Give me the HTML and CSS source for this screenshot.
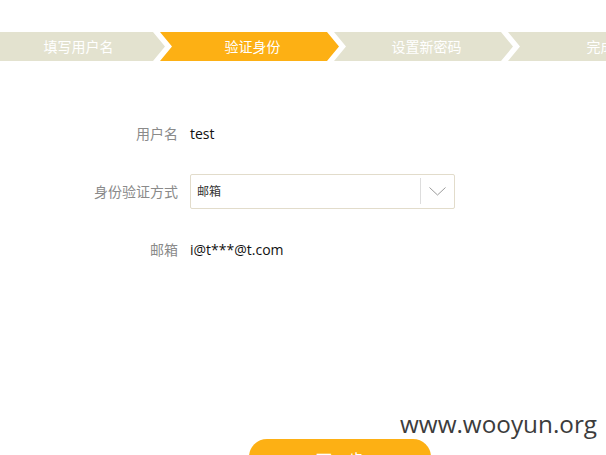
FILE: index.html
```html
<!DOCTYPE html>
<html lang="zh">
<head>
<meta charset="utf-8">
<link rel="stylesheet" href="styles.css">
</head>
<body>
<div class="page">
  <div class="steps">
    <div class="step">填写用户名</div>
    <div class="step active">验证身份</div>
    <div class="step">设置新密码</div>
    <div class="step">完成</div>
  </div>
  <div class="form">
    <div class="row">
      <div class="label">用户名</div>
      <div class="value">test</div>
    </div>
    <div class="row">
      <div class="label">身份验证方式</div>
      <div class="select">
        <span class="select-text">邮箱</span>
        <span class="select-arrow">
          <svg width="17" height="9" viewBox="0 0 17 9"><path d="M0.5 0.5 L8.5 8 L16.5 0.5" fill="none" stroke="#9a9a9a" stroke-width="1"/></svg>
        </span>
      </div>
    </div>
    <div class="row">
      <div class="label">邮箱</div>
      <div class="value">i@t***@t.com</div>
    </div>
  </div>
  <div class="actions">
    <button class="btn">下一步</button>
  </div>
  <div class="watermark">www.wooyun.org</div>
</div>
</body>
</html>
```
FILE: styles.css
```css
html, body {
  margin: 0;
  padding: 0;
  background: #fff;
  overflow: hidden;
}
body {
  font-family: "Open Sans", "Noto Sans CJK SC", sans-serif;
  width: 606px;
  height: 455px;
}
.page {
  position: relative;
  width: 606px;
  height: 455px;
  overflow: hidden;
}
.steps {
  display: flex;
  margin-top: 32px;
  margin-left: -14px;
  height: 29px;
  width: 760px;
}
.step {
  flex: 0 0 179px;
  box-sizing: border-box;
  padding-left: 6px;
  height: 29px;
  margin-right: -5px;
  background: #e3e2cf;
  color: #fff;
  font-size: 14px;
  line-height: 29px;
  text-align: center;
  clip-path: polygon(0 0, 167px 0, 179px 50%, 167px 100%, 0 100%, 12px 50%);
}
.step.active {
  background: #fdb014;
}
.form {
  margin-top: 54px;
  display: flex;
  flex-direction: column;
  gap: 22px;
}
.row {
  display: flex;
  align-items: center;
  height: 36px;
  gap: 12px;
}
.label {
  width: 178px;
  text-align: right;
  color: #8a8a8a;
  font-size: 14px;
}
.value {
  color: #111;
  font-size: 14px;
}
.select {
  width: 263px;
  height: 33px;
  border: 1px solid #e2dccb;
  border-radius: 2px;
  display: flex;
  align-items: center;
  justify-content: space-between;
}
.select-text {
  padding-left: 6px;
  font-size: 12px;
  color: #333;
}
.select-arrow {
  height: 26px;
  border-left: 1px solid #ddd;
  width: 33px;
  display: flex;
  align-items: center;
  justify-content: center;
}
.select-arrow svg {
  display: block;
}
.actions {
  margin-top: 172px;
  padding-left: 249px;
}
.btn {
  width: 182px;
  height: 40px;
  border: none;
  border-radius: 18px;
  background: #fdb014;
  color: #fff;
  font-family: "Open Sans", "Noto Sans CJK SC", sans-serif;
  font-size: 16px;
  padding: 0;
}
.watermark {
  position: absolute;
  left: 400px;
  top: 407px;
  font-family: "Open Sans", "Noto Sans", sans-serif;
  font-size: 24.3px;
  color: #3c3c3c;
}
```
